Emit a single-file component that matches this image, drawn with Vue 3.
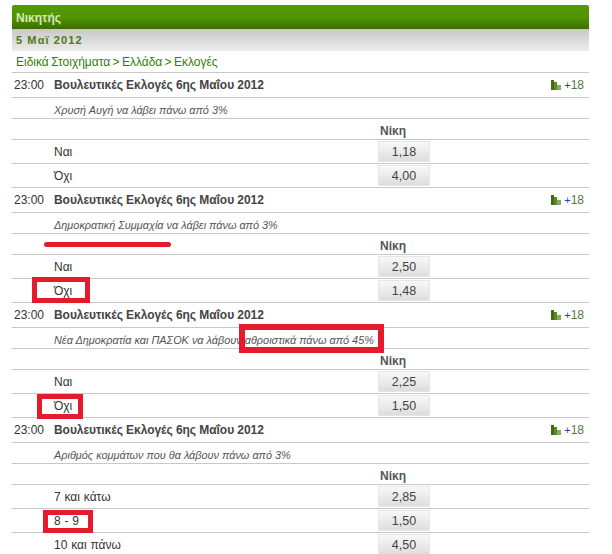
<script setup>
const events = [
  { sub: 'Χρυσή Αυγή να λάβει πάνω από 3%', rows: [['Ναι', '1,18'], ['Όχι', '4,00']] },
  { sub: 'Δημοκρατική Συμμαχία να λάβει πάνω από 3%', rows: [['Ναι', '2,50'], ['Όχι', '1,48']] },
  { sub: 'Νέα Δημοκρατία και ΠΑΣΟΚ να λάβουν αθροιστικά πάνω από 45%', rows: [['Ναι', '2,25'], ['Όχι', '1,50']] },
  { sub: 'Αριθμός κομμάτων που θα λάβουν πάνω από 3%', rows: [['7 και κάτω', '2,85'], ['8 - 9', '1,50'], ['10 και πάνω', '4,50']] }
]
const marks = [
  { left: 32, top: 277, width: 58, height: 26, border: 5 },
  { left: 239, top: 324, width: 145, height: 29, border: 6 },
  { left: 37, top: 394, width: 46, height: 25, border: 5 },
  { left: 43, top: 510, width: 50, height: 23, border: 5 }
]
const boxStyle = (m) => ({
  left: m.left + 'px',
  top: m.top + 'px',
  width: m.width + 'px',
  height: m.height + 'px',
  borderWidth: m.border + 'px'
})
</script>

<template>
  <div class="page">
    <div class="panel">
      <div class="title">Νικητής</div>
      <div class="date">5 Μαϊ 2012</div>
      <div class="crumbs">Ειδικά Στοιχήματα &gt; Ελλάδα &gt; Εκλογές</div>
      <section v-for="(e, i) in events" :key="i">
        <div class="event">
          <span class="time">23:00</span>
          <span class="name">Βουλευτικές Εκλογές 6ης Μαΐου 2012</span>
          <span class="more">
            <svg width="10" height="10" viewBox="0 0 10 10" aria-hidden="true">
              <rect x="0" y="0" width="3" height="10" fill="#3f6b12" />
              <rect x="3" y="2" width="3" height="8" fill="#5c8a24" />
              <rect x="6" y="5" width="4" height="5" fill="#8aa860" />
            </svg>
            <span class="plus">+</span><span class="count">18</span>
          </span>
        </div>
        <div class="sub">{{ e.sub }}</div>
        <div class="head"><span class="win">Νίκη</span></div>
        <div v-for="r in e.rows" :key="r[0]" class="row">
          <span class="label">{{ r[0] }}</span>
          <span class="odd">{{ r[1] }}</span>
        </div>
      </section>
    </div>
    <div class="underline"></div>
    <div v-for="(m, i) in marks" :key="i" class="mark" :style="boxStyle(m)"></div>
  </div>
</template>

<style scoped>
.page {
  position: relative;
  width: 612px;
  height: 554px;
  overflow: hidden;
  background: #fff;
  font-family: "Liberation Sans", Arial, sans-serif;
  font-size: 12px;
  color: #333;
}
.panel {
  width: 577px;
  margin-left: 12px;
  padding-top: 5px;
}
.title {
  height: 24px;
  line-height: 26px;
  padding-left: 4px;
  box-sizing: border-box;
  border-radius: 2px 2px 0 0;
  background: linear-gradient(#559a00, #4f9300 55%, #3a6d04);
  color: #d5e8b8;
  font-weight: bold;
}
.date {
  height: 22px;
  line-height: 23px;
  padding-left: 4px;
  background: linear-gradient(#c8c8c8, #ececec);
  color: #4f7a14;
  font-weight: bold;
  font-size: 11px;
  letter-spacing: 1.1px;
}
.crumbs {
  height: 22px;
  line-height: 22px;
  padding-left: 4px;
  box-sizing: border-box;
  border-bottom: 1px solid #c8c8c8;
  color: #338000;
  font-size: 12px;
  word-spacing: -1px;
  white-space: nowrap;
}
.event {
  display: flex;
  align-items: center;
  height: 25px;
  box-sizing: border-box;
  border-bottom: 1px solid #c8c8c8;
}
.time {
  width: 42px;
  padding-left: 2px;
  box-sizing: border-box;
  color: #333;
}
.name {
  font-weight: bold;
  color: #444;
  letter-spacing: -0.05px;
}
.more {
  margin-left: auto;
  margin-right: 5px;
  display: flex;
  align-items: center;
  color: #4f7a3a;
}
.more svg {
  margin-right: 3px;
}
.plus {
  color: #2a3f9a;
  font-size: 11px;
}
.sub {
  height: 21px;
  line-height: 24px;
  padding-left: 42px;
  box-sizing: border-box;
  border-bottom: 1px solid #c8c8c8;
  font-style: italic;
  font-size: 10.9px;
  color: #555;
  white-space: nowrap;
}
.head {
  height: 21px;
  box-sizing: border-box;
  border-bottom: 1px solid #c8c8c8;
  padding-left: 368px;
  line-height: 24px;
}
.win {
  font-weight: bold;
  color: #555;
}
.row {
  display: flex;
  align-items: center;
  height: 24px;
  box-sizing: border-box;
  border-bottom: 1px solid #c8c8c8;
}
.label {
  width: 366px;
  padding-left: 42px;
  box-sizing: border-box;
  color: #333;
  word-spacing: 0.5px;
}
.odd {
  width: 52px;
  height: 21px;
  line-height: 20px;
  box-sizing: border-box;
  text-align: center;
  border: 1px solid #e6e6e6;
  background: linear-gradient(#f8f8f8, #dcdedc);
  color: #444;
  font-size: 12.5px;
}
.underline {
  position: absolute;
  left: 44px;
  top: 242px;
  width: 127px;
  height: 5px;
  border-radius: 3px;
  background: #e31b2c;
}
.mark {
  position: absolute;
  box-sizing: border-box;
  border-style: solid;
  border-color: #e31b2c;
}
</style>
